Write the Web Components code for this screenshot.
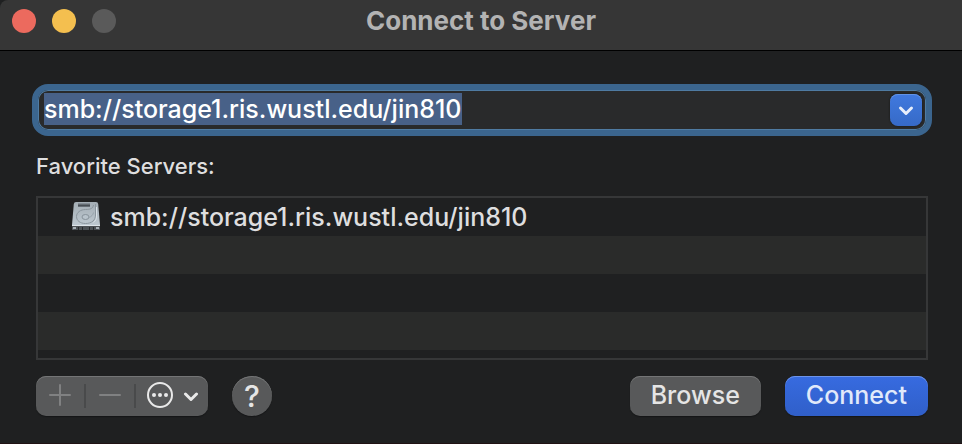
<!DOCTYPE html>
<html lang="en">
<head>
<meta charset="utf-8">
<title>Connect to Server</title>
<style>
html,body{margin:0;min-height:100%;background:#1f2021}
body{font-family:Inter,"Liberation Sans",sans-serif;color:#dededf}
</style>
</head>
<body>
<app-window heading="Connect to Server">
  <server-combo value="smb://storage1.ris.wustl.edu/jin810"></server-combo>
  <favorite-list label="Favorite Servers:">
    <server-item>smb://storage1.ris.wustl.edu/jin810</server-item>
  </favorite-list>
  <action-bar>
    <list-tools></list-tools>
    <push-button kind="help" label="Help">?</push-button>
    <push-button slot="end">Browse</push-button>
    <push-button slot="end" kind="primary">Connect</push-button>
  </action-bar>
</app-window>
<script>
const reset = `*{box-sizing:border-box}button{font:inherit;color:inherit;border:0;margin:0;padding:0;background:none}svg{display:block}`;
class Base extends HTMLElement {
  constructor() { super(); this.attachShadow({ mode: "open" }); }
  connectedCallback() {
    this.shadowRoot.innerHTML = `<style>${reset}${this.css()}</style>${this.html()}`;
    this.ready();
  }
  attr(n) { return this.getAttribute(n) || ""; }
  ready() {}
}

customElements.define("app-window", class extends Base {
  css() { return `
    :host{display:block;box-sizing:border-box;min-height:100vh;background:#1f2021;border-top-left-radius:8px;border-bottom:1px solid #201214;overflow:hidden}
    header{display:grid;grid-template-columns:1fr auto 1fr;align-items:center;height:51px;padding:0 12px 8px;background:#363636;border-bottom:1px solid #000}
    .lights{display:flex;gap:16px}
    .lights button{width:24px;height:24px;border-radius:50%;background:#5a5a5a}
    .lights .close{background:#ec6a5e}.lights .min{background:#f4bf4f}
    h1{margin:0;font-size:26px;line-height:32px;font-weight:700;color:#b3b3b3}
    main{display:flex;flex-direction:column;padding:33px 34px 24px 36px}`; }
  html() { return `
    <header><div class="lights"><button class="close" aria-label="Close"></button><button class="min" aria-label="Minimize"></button><button aria-label="Zoom" disabled></button></div>
    <h1>${this.attr("heading")}</h1></header><main><slot></slot></main>`; }
});

customElements.define("server-combo", class extends Base {
  css() { return `
    :host{display:block;margin:0 -4px}
    .field{display:flex;align-items:center;height:52px;border:6px solid #3b658e;border-radius:16px;background:#292a2b;box-shadow:inset 0 0 0 1px #4f7ba2;padding:0 4px 0 6px}
    input{flex:1;min-width:0;height:32px;border:0;padding:0;margin:0 0 2px;outline:0;background:none;color:#fff;font:500 25px/32px Inter,"Liberation Sans",sans-serif}
    input::selection{background:#486188;color:#fff}
    button{width:32px;height:32px;border-radius:8px;background:linear-gradient(#4079df,#366ac7);box-shadow:inset 0 1px #6293e6,0 0 2px #111;display:grid;place-items:center}`; }
  html() { return `<div class="field"><input type="text" aria-label="Server address" spellcheck="false" value="${this.attr("value")}"><button aria-label="Show recent servers"><svg width="16" height="12" viewBox="0 0 16 12" fill="none" stroke="#e7eefb" stroke-width="3" stroke-linecap="round" stroke-linejoin="round"><path d="M2.500 4 8 9.500 13.500 4"/></svg></button></div>`; }
  ready() { const i = this.shadowRoot.querySelector("input"); i.focus(); i.select(); }
});

customElements.define("favorite-list", class extends Base {
  css() { return `
    :host{display:block;padding:14px 0 16px}
    h2{margin:0 0 14px;font-size:22px;line-height:32px;font-weight:500}
    .list{height:164px;border:2px solid #363738;background:repeating-linear-gradient(#1f2021 0 38px,#2a2b2a 38px 76px)}`; }
  html() { return `<h2 id="l">${this.attr("label")}</h2><div class="list" role="list" aria-labelledby="l"><slot></slot></div>`; }
});

customElements.define("server-item", class extends Base {
  css() { return `
    :host{display:flex;align-items:center;gap:10px;height:38px;padding-left:34px;font-size:25px;line-height:32px;font-weight:500}
    svg{flex:none}`; }
  html() { return `
    <svg width="28" height="30" viewBox="0 0 28 30" aria-hidden="true">
      <defs><linearGradient id="g" x2="0" y2="1"><stop stop-color="#a3adb4"/><stop offset="1" stop-color="#c3ced6"/></linearGradient></defs>
      <path d="M4 0h20q2 0 2.200 2L28 23v3q0 2-2 2H2q-2 0-2-2v-3L1.800 2Q2 0 4 0z" fill="url(#g)"/>
      <path d="M0 24h28v2q0 2-2 2H2q-2 0-2-2z" fill="#4b5054"/><path d="M0 23.500h28" stroke="#dce3e8"/>
      <path d="M1 25h3v2H1zM24 25h3v2h-3z" fill="#a7afb5"/><path d="M6.500 25v3m4-3v3m7-3v3m4-3v3" stroke="#25282a"/>
      <path d="M6 1.500h12V5H6z" fill="#656d74"/><path d="M6 3.500h12" stroke="#474e54"/>
      <path d="M23.500 2v11c0 5-3.500 8.500-10 8.500-5.500 0-9-3-9-7s4-7 9-7c5 0 7.500-1 8-4.500" fill="none" stroke="#8a959d"/>
      <path d="M24.500 5v9c0 3-1 5-3 6.500" fill="none" stroke="#d9e1e7"/>
      <ellipse cx="13.500" cy="15" rx="3.500" ry="2.500" fill="#b9c4cc" stroke="#87929a"/>
      <path d="M17 15.500c2.500-1 4-2.500 4.500-5" fill="none" stroke="#98a3ab"/>
    </svg><span><slot></slot></span>`; }
  ready() { this.setAttribute("role", "listitem"); }
});

customElements.define("action-bar", class extends Base {
  css() { return `:host{display:flex;align-items:center;justify-content:space-between}.group{display:flex;gap:24px}`; }
  html() { return `<div class="group"><slot></slot></div><div class="group"><slot name="end"></slot></div>`; }
});

customElements.define("list-tools", class extends Base {
  css() { return `
    :host{display:flex;align-items:center;height:40px;border-radius:10px;background:#58595a;box-shadow:inset 0 1px #747576,0 1px 1px #151617}
    button{height:40px;display:flex;align-items:center;justify-content:center;gap:10px;width:48px}
    .more{width:72px;padding:0 0 2px 2px}
    i{width:2px;height:24px;background:#494a4b}`; }
  html() { return `
    <button aria-label="Add" disabled><svg width="22" height="24" fill="none" stroke="#808182" stroke-width="2" stroke-linecap="round"><path d="M1 11h20M11 1v20"/></svg></button><i></i>
    <button aria-label="Remove" disabled><svg width="22" height="24" fill="none" stroke="#808182" stroke-width="2" stroke-linecap="round"><path d="M1 11h20"/></svg></button><i></i>
    <button class="more" aria-label="More actions"><svg width="26" height="26" viewBox="0 0 26 26"><circle cx="13" cy="13" r="12" fill="none" stroke="#e9e9e9" stroke-width="2"/><g fill="#e9e9e9"><circle cx="7" cy="13" r="2"/><circle cx="13" cy="13" r="2"/><circle cx="19" cy="13" r="2"/></g></svg>
    <svg width="16" height="12" viewBox="0 0 16 12" fill="none" stroke="#e9e9e9" stroke-width="3" stroke-linecap="round" stroke-linejoin="round"><path d="M2.500 5 8 10.500 13.500 5"/></svg></button>`; }
});

customElements.define("push-button", class extends Base {
  css() { return `
    :host{display:block}
    button{height:40px;padding:0 21px 2px;border-radius:10px;font-size:25px;line-height:32px;font-weight:500;background:#58595a;color:#e5e5e5;box-shadow:inset 0 1px #747576,0 1px 1px #151617}
    .primary{background:linear-gradient(#376be0,#305fc9);color:#e1e9fa;box-shadow:inset 0 1px #6d94e9,0 1px 1px #151617}
    .help{width:40px;padding:0;border-radius:50%;font-size:30px}`; }
  html() { const l = this.attr("label"); return `<button class="${this.attr("kind")}"${l ? ` aria-label="${l}"` : ""}><slot></slot></button>`; }
});
</script>
</body>
</html>
